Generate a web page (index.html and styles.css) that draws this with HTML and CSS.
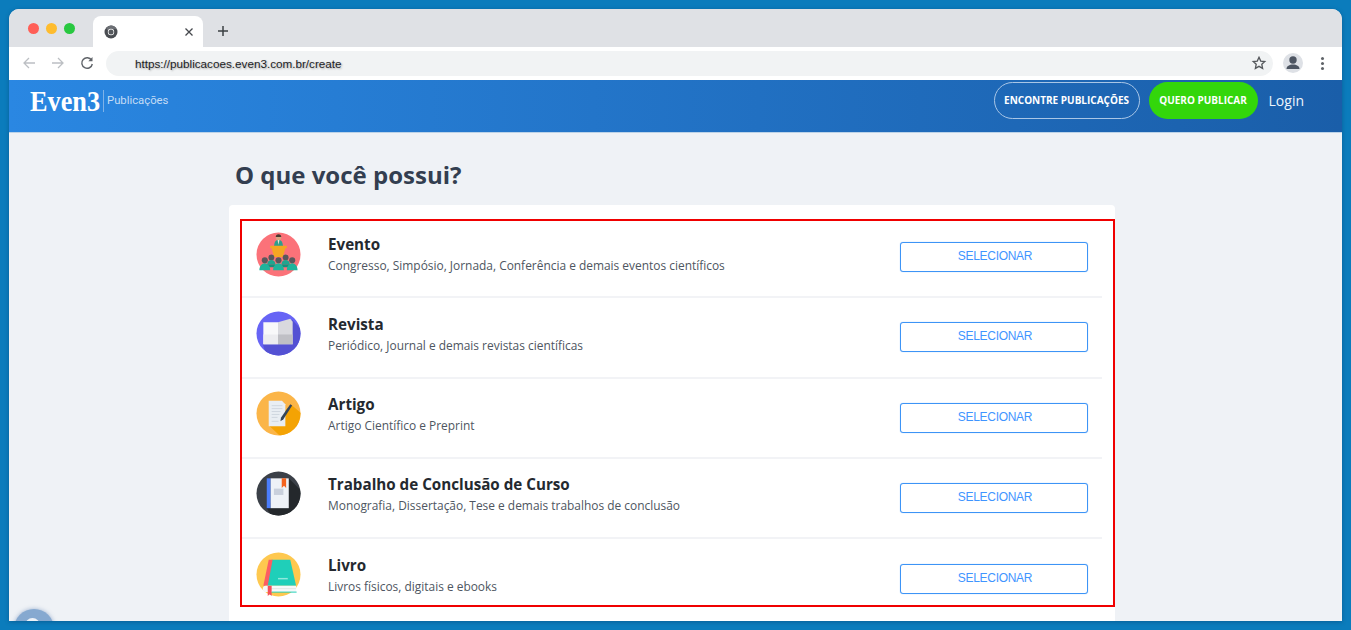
FILE: index.html
```html
<!DOCTYPE html>
<html lang="pt-BR">
<head>
<meta charset="utf-8">
<title>Even3 Publicações</title>
<link rel="stylesheet" href="styles.css">
</head>
<body>
<div class="window">
  <div class="tabstrip">
    <div class="lights"><span class="light red"></span><span class="light yellow"></span><span class="light green"></span></div>
    <div class="tab">
      <svg class="chrome" viewBox="0 0 14 14"><circle cx="7" cy="7" r="6.5" fill="#4a4d52"/><path d="M7 .5a6.500 6.500 0 0 1 5.700 3.400H7a3.100 3.100 0 0 0-3 2.200L2.200 3A6.500 6.500 0 0 1 7 .5z" fill="#6c6f74"/><circle cx="7" cy="7" r="3.200" fill="#fff"/><circle cx="7" cy="7" r="2.500" fill="#55585d"/></svg>
      <svg class="close" viewBox="0 0 10 10"><path d="M1.500 1.500l7 7M8.500 1.500l-7 7" stroke="#45484d" stroke-width="1.300" fill="none"/></svg>
    </div>
    <svg class="plus" viewBox="0 0 12 12"><path d="M6 1v10M1 6h10" stroke="#3c4043" stroke-width="1.500" fill="none"/></svg>
  </div>
  <div class="toolbar">
    <svg class="nav" viewBox="0 0 14 14"><path d="M13 7H2M7 2L2 7l5 5" stroke="#bcbfc3" stroke-width="1.300" fill="none"/></svg>
    <svg class="nav" viewBox="0 0 14 14"><path d="M1 7h11M7 2l5 5-5 5" stroke="#bcbfc3" stroke-width="1.300" fill="none"/></svg>
    <svg class="nav" viewBox="0 0 14 14"><path d="M11.600 4.200A5.300 5.300 0 1 0 12.300 8" stroke="#5f6368" stroke-width="1.400" fill="none"/><path d="M12.500 1v4.200H8.300z" fill="#5f6368"/></svg>
    <div class="omnibox">
      <span class="url">https://publicacoes.even3.com.br/create</span>
      <svg class="star" viewBox="0 0 24 24"><path d="M12 3.500l2.600 5.600 6.100.7-4.500 4.200 1.200 6.100L12 17l-5.400 3.100 1.200-6.100-4.500-4.200 6.100-.7z" fill="none" stroke="#55585c" stroke-width="2"/></svg>
    </div>
    <div class="avatar"><svg viewBox="0 0 20 20"><circle cx="10" cy="7" r="3.700" fill="#4d5562"/><path d="M3.500 16c0-3 3-4.500 6.500-4.500s6.500 1.500 6.500 4.500z" fill="#4d5562"/></svg></div>
    <div class="kebab"><i></i><i></i><i></i></div>
  </div>
  <header class="site-header">
    <div class="brand">
      <span class="logo">Even3</span>
      <span class="brand-name">Publicações</span>
    </div>
    <nav class="site-nav">
      <a class="pill pill-outline">ENCONTRE PUBLICAÇÕES</a>
      <a class="pill pill-green">QUERO PUBLICAR</a>
      <a class="login">Login</a>
    </nav>
  </header>
  <main class="content">
    <h1 class="title">O que você possui?</h1>
    <section class="card">
      <div class="highlight">
        <div class="row">
          <svg class="icon" viewBox="0 0 46 46">
            <defs><clipPath id="disc"><circle cx="23" cy="23" r="22.500"/></clipPath></defs>
            <circle cx="23" cy="23" r="22.500" fill="#fb7279"/>
            <path d="M18.500 15c0-5 2-7 4.500-7s4.500 2 4.500 7z" fill="#2f9e8d"/>
            <path d="M22 8h2l-1 5z" fill="#f4e3d0"/>
            <circle cx="23" cy="5.500" r="2.800" fill="#d8a47f"/>
            <path d="M20.200 5.200a2.800 2.800 0 0 1 5.600 0z" fill="#4a3a32"/>
            <path d="M14.500 14h17v2.500H30l-2.500 9h-9l-2.500-9h-1.500z" fill="#f5a623"/>
            <path d="M11 33h9v3h-9zM26 33h9v3h-9z" fill="#178f7d"/>
            <circle cx="15.700" cy="26" r="3" fill="#58585c"/><circle cx="30.300" cy="26" r="3" fill="#58585c"/>
            <path d="M11.500 33c0-3 2-4.500 4.200-4.500s4.200 1.500 4.200 4.500zM26 33c0-3 2-4.500 4.300-4.500s4.300 1.500 4.300 4.500z" fill="#1ea690"/>
            <circle cx="9" cy="29" r="3.100" fill="#58585c"/><circle cx="23" cy="29" r="3.100" fill="#58585c"/><circle cx="37" cy="29" r="3.100" fill="#58585c"/>
            <path d="M3.500 39c0-4 2.500-7 5.500-7s5.500 3 5.500 7zM17.500 39c0-4 2.500-7 5.500-7s5.500 3 5.500 7zM31.500 39c0-4 2.500-7 5.500-7s5.500 3 5.500 7z" fill="#1fb39b"/>
          </svg>
          <div class="text"><h2>Evento</h2><p>Congresso, Simpósio, Jornada, Conferência e demais eventos científicos</p></div>
          <button class="select">SELECIONAR</button>
        </div>
        <div class="row">
          <svg class="icon" viewBox="0 0 46 46">
            <circle cx="23" cy="23" r="22.500" fill="#6764f5"/>
            <path d="M37 9L50 23V50H12L7 34z" fill="#5451d3" clip-path="url(#disc)"/>
            <path d="M7.500 11.500h15V34h-15z" fill="#f8f8fa"/>
            <path d="M7.500 24h15v10h-15z" fill="#ececf0"/>
            <path d="M22.500 11.500L35 8l2.500 3v23h-15z" fill="#d9d9de"/>
            <path d="M22.500 24h15v10h-15z" fill="#bfbfc5"/>
          </svg>
          <div class="text"><h2>Revista</h2><p>Periódico, Journal e demais revistas científicas</p></div>
          <button class="select">SELECIONAR</button>
        </div>
        <div class="row">
          <svg class="icon" viewBox="0 0 46 46">
            <circle cx="23" cy="23" r="22.500" fill="#fbb548"/>
            <path d="M36 14L50 26V50H29L14 36z" fill="#f4a304" clip-path="url(#disc)"/>
            <path d="M13 10h13.500l3.500 3.500V36H13z" fill="#e9eef3"/>
            <path d="M16 15h11M16 18h11M16 21h9M16 24h8M16 27h6M16 31h7" stroke="#cfd6de" fill="none"/>
            <path d="M35 13.500l2 1.300-9 14.200-3 2 .5-3.600z" fill="#34465a"/>
          </svg>
          <div class="text"><h2>Artigo</h2><p>Artigo Científico e Preprint</p></div>
          <button class="select">SELECIONAR</button>
        </div>
        <div class="row">
          <svg class="icon" viewBox="0 0 46 46">
            <circle cx="23" cy="23" r="22.500" fill="#3b4048"/>
            <path d="M33 7L50 24V50H18L11 38z" fill="#24282c" clip-path="url(#disc)"/>
            <path d="M11 7.500h4V38h-4z" fill="#4a7dfc"/>
            <path d="M15 7.500h18.500V38H15z" fill="#eef2f7"/>
            <path d="M18.300 18H28v6.500h-9.700z" fill="#c9d0dc"/>
            <path d="M26.300 7.500h4.500v10l-2.200-2.300-2.300 2.300z" fill="#f4631e"/>
          </svg>
          <div class="text"><h2>Trabalho de Conclusão de Curso</h2><p>Monografia, Dissertação, Tese e demais trabalhos de conclusão</p></div>
          <button class="select">SELECIONAR</button>
        </div>
        <div class="row">
          <svg class="icon" viewBox="0 0 46 46">
            <circle cx="23" cy="23" r="22.500" fill="#fec84f"/>
            <path d="M16 8h19l6 26.500H11z" fill="#1fcfb9"/>
            <path d="M13 8h4l-5 26.500H7.500z" fill="#fb5d64"/>
            <path d="M22.500 26.500h10V28h-10z" fill="#8fe8dc"/>
            <path d="M10 34.500h31V41H10c-2 0-3-1-3-3.200s1-3.300 3-3.300z" fill="#f7f9f9"/>
            <path d="M12 37h29v1H12z" fill="#dfe6e4"/>
            <path d="M12 34.500h4V45l-2-1.800L12 45z" fill="#f4505a"/>
            <path d="M16 40.500h25.500v1H16z" fill="#1fcfb9"/>
          </svg>
          <div class="text"><h2>Livro</h2><p>Livros físicos, digitais e ebooks</p></div>
          <button class="select">SELECIONAR</button>
        </div>
      </div>
    </section>
    <div class="chat"><span class="chat-inner"></span></div>
  </main>
</div>
</body>
</html>
```
FILE: styles.css
```css
* { box-sizing: border-box; }
html, body { margin: 0; height: 100%; }
body {
  width: 1351px;
  height: 630px;
  overflow: hidden;
  background: #0b7cbc;
  padding: 9px;
  font-family: "Open Sans", "Noto Sans", sans-serif;
}
.window {
  position: relative;
  width: 1333px;
  height: 612px;
  border-radius: 10px 10px 0 0;
  overflow: hidden;
  background: #eff2f6;
  display: flex;
  flex-direction: column;
  box-shadow: 0 1px 4px rgba(0, 40, 80, .35);
}
.tabstrip {
  height: 38px;
  flex: none;
  background: #dfe1e5;
  display: flex;
  align-items: flex-start;
}
.lights { display: flex; gap: 7px; padding: 14px 0 0 19px; }
.light { width: 11px; height: 11px; border-radius: 50%; }
.red { background: #ff5f57; }
.yellow { background: #febc2e; }
.green { background: #28c840; }
.tab {
  width: 110px;
  height: 31px;
  margin: 7px 0 0 18px;
  background: #fff;
  border-radius: 8px 8px 0 0;
  display: flex;
  align-items: center;
  justify-content: space-between;
  padding: 0 9px 0 11px;
}
.chrome { width: 14px; height: 14px; }
.close { width: 10px; height: 10px; }
.plus { width: 12px; height: 12px; margin: 16px 0 0 14px; }
.toolbar {
  height: 33px;
  flex: none;
  background: #fff;
  display: flex;
  align-items: center;
  padding: 0 14px 1px 13px;
  gap: 15px;
}
.nav { width: 14px; height: 14px; }
.omnibox {
  width: 1167px;
  height: 25px;
  margin-left: -3px;
  border-radius: 13px;
  background: #f1f3f4;
  display: flex;
  align-items: center;
  justify-content: space-between;
  padding: 0 6px 0 29px;
}
.url {
  font: 11.700px "Liberation Sans", Arial, sans-serif;
  color: #1d1d1f;
  text-shadow: 1px 1px 2px rgba(0, 0, 0, .3);
}
.star { width: 16px; height: 16px; }
.avatar {
  width: 20px;
  height: 20px;
  border-radius: 50%;
  background: #dee1e6;
  margin-left: -5px;
}
.avatar svg { display: block; width: 20px; height: 20px; }
.kebab { display: flex; flex-direction: column; gap: 2px; margin-left: 3px; }
.kebab i { width: 3px; height: 3px; border-radius: 50%; background: #5f6368; }
.site-header {
  height: 53px;
  flex: none;
  background: linear-gradient(90deg, #2a87e2 0%, #1a5ea9 100%);
  display: flex;
  align-items: center;
  justify-content: space-between;
  padding: 0 38px 12px 21px;
  border-bottom: 1px solid #bcd3e8;
}
.brand { display: flex; align-items: center; padding-top: 2px; }
.logo {
  font: 700 30px/26px "Liberation Serif", serif;
  color: #fff;
  width: 73px;
  height: 26px;
  transform-origin: left center;
  transform: scaleX(.875);
}
.brand-name {
  font: 11.300px "Roboto", sans-serif;
  color: #c4dcf5;
  border-left: 1px solid #7eb2e8;
  padding-left: 3px;
  height: 22px;
  line-height: 22px;
}
.site-nav { display: flex; align-items: center; }
.pill {
  height: 37px;
  border-radius: 19px;
  font-size: 10px;
  font-weight: 700;
  color: #fff;
  display: flex;
  align-items: center;
  justify-content: center;
}
.pill-outline { width: 146px; border: 1px solid #a9c6e6; }
.pill-green { width: 109px; margin-left: 9px; background: #33d60b; }
.login { font-size: 14px; color: #eef5fc; margin-left: 11px; }
.content { position: relative; flex: 1; padding: 0 0 0 220px; min-height: 0; }
.title {
  margin: 0;
  padding: 25px 0 0 6px;
  height: 72px;
  font-size: 24px;
  line-height: 33px;
  font-weight: 700;
  color: #333e50;
}
.card {
  width: 886px;
  height: 420px;
  background: #fff;
  border-radius: 4px 4px 0 0;
  padding: 14px 0 0 11px;
}
.highlight {
  width: 875px;
  height: 388px;
  border: 2px solid #f00000;
  padding-right: 11px;
  overflow: hidden;
}
.row {
  height: 80px;
  border-bottom: 2px solid #f2f3f6;
  display: flex;
  align-items: flex-start;
  padding-left: 14px;
}
.row:first-child { height: 77px; }
.row:nth-child(2) { height: 81px; }
.row:last-child { border-bottom: 0; }
.icon { width: 45px; height: 45px; flex: none; margin-top: 12px; }
.row:first-child .icon { margin-top: 11px; }
.row:nth-child(2) .icon,
.row:last-child .icon { margin-top: 13px; }
.text { flex: 1; padding: 15px 0 0 27px; min-width: 0; }
.row:first-child .text { padding-top: 13px; }
.row:nth-child(2) .text,
.row:last-child .text { padding-top: 16px; }
.text h2 {
  margin: 0;
  font-size: 15.200px;
  line-height: 20px;
  font-weight: 700;
  color: #24292f;
}
.text p {
  margin: 3px 0 0;
  font-size: 11.930px;
  line-height: 17px;
  color: #4e5661;
}
.select {
  width: 188px;
  height: 30px;
  flex: none;
  margin: 24px 14px 0 0;
  background: #fff;
  border: 1px solid #3d94f6;
  border-radius: 3px;
  box-shadow: 0 0 1px #7ab6fa;
  color: #3f95ff;
  font: 12px "Liberation Sans", Arial, sans-serif;
  letter-spacing: -.3px;
  padding: 0 0 3px 2px;
}
.row:first-child .select { margin-top: 21px; }
.row:last-child .select { margin-top: 25px; }
.chat {
  position: absolute;
  left: 5px;
  top: 476px;
  width: 40px;
  height: 40px;
  border-radius: 50%;
  background: #86a9d0;
  box-shadow: 0 0 4px rgba(70, 110, 170, .5);
}
.chat-inner {
  position: absolute;
  left: 11px;
  top: 9px;
  width: 15px;
  height: 15px;
  border-radius: 50%;
  background: #eef2f7;
}
```
